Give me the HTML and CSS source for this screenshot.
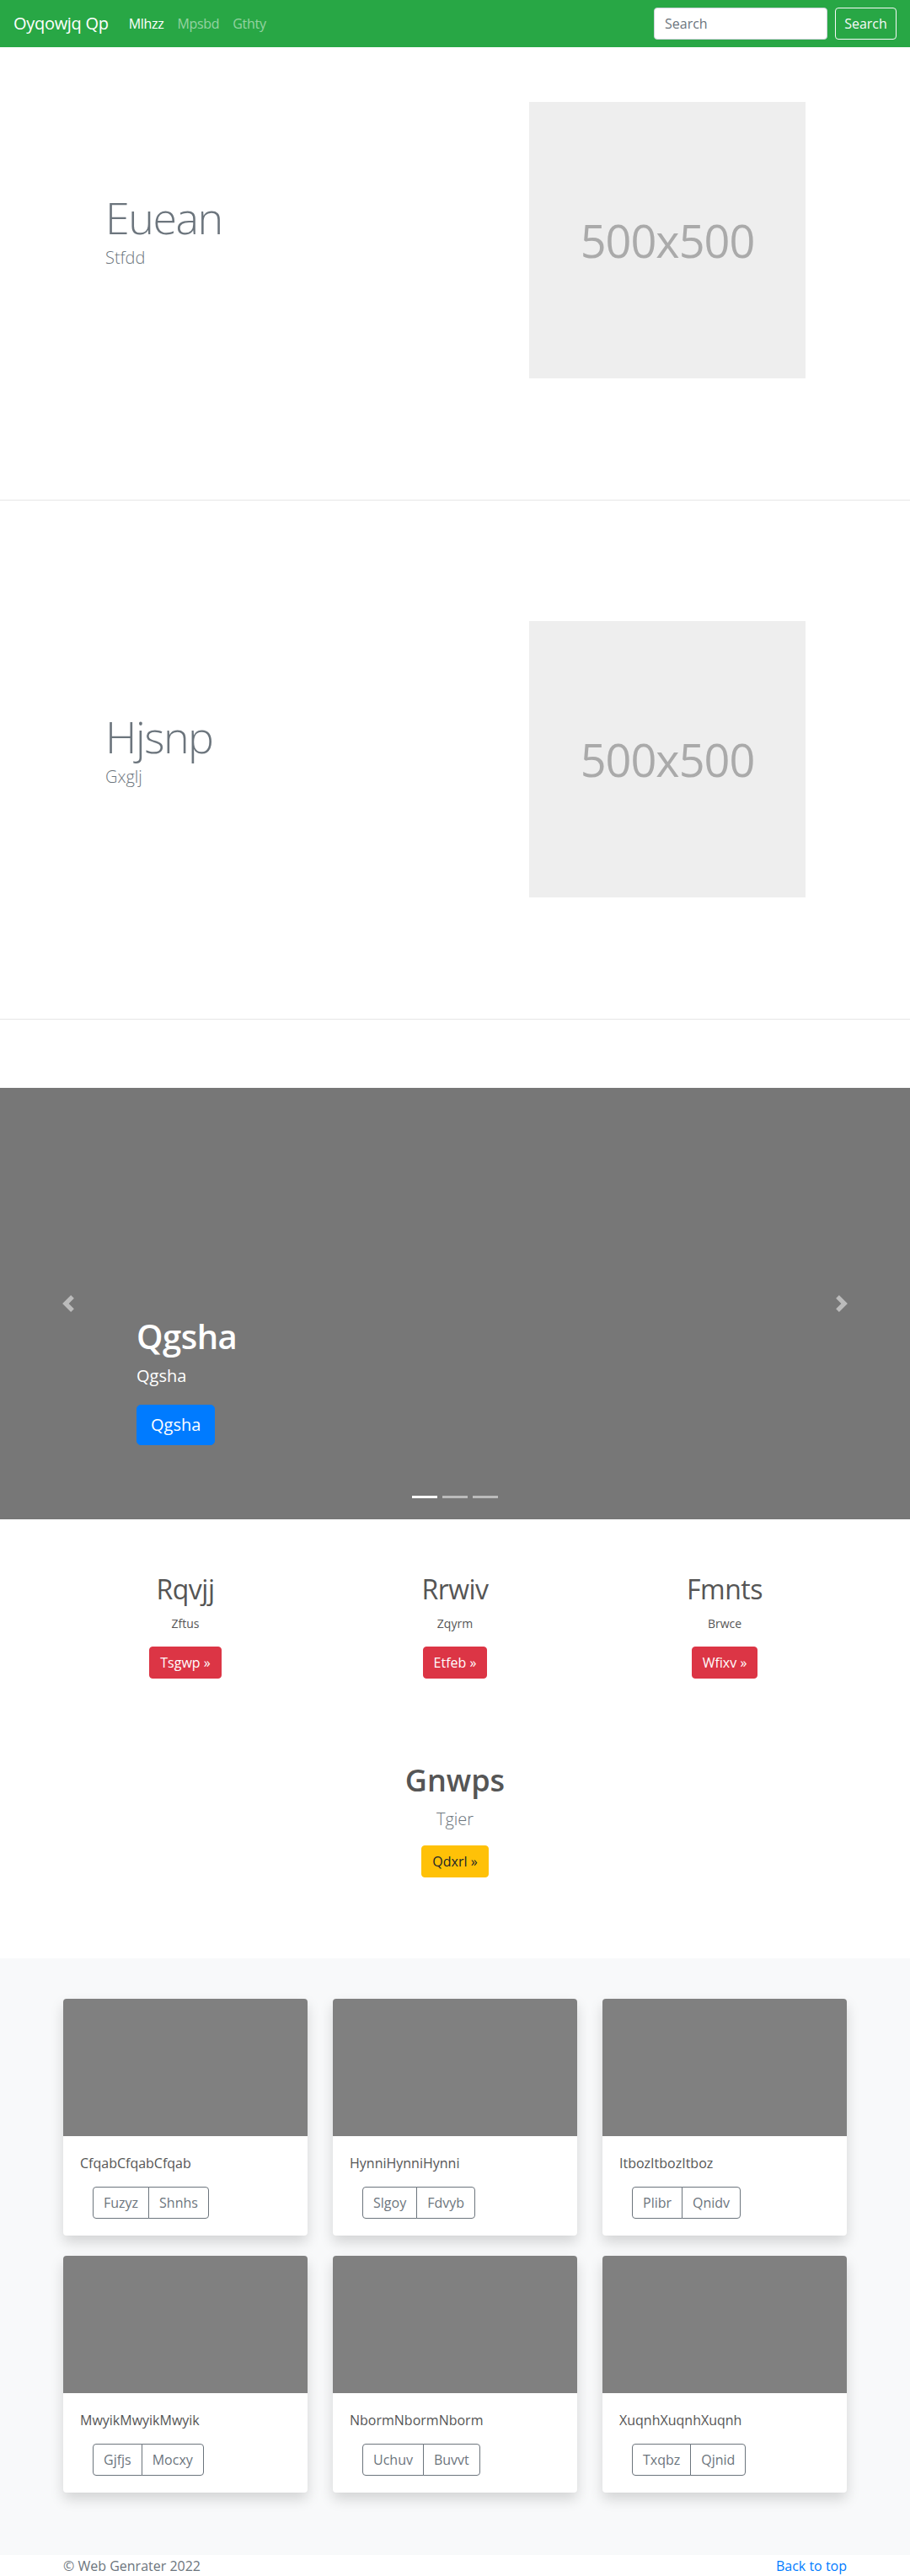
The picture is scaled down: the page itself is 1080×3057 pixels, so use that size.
FILE: index.html
```html
<!DOCTYPE html>
<html lang="en">
<head>
<meta charset="utf-8">
<title>Oyqowjq Qp</title>
<link rel="stylesheet" href="styles.css">
</head>
<body>
<nav class="navbar">
  <a class="brand" href="#">Oyqowjq Qp</a>
  <ul class="nav">
    <li><a class="active" href="#">Mlhzz</a></li>
    <li><a href="#">Mpsbd</a></li>
    <li><a href="#">Gthty</a></li>
  </ul>
  <form class="search">
    <input type="text" placeholder="Search">
    <button type="button">Search</button>
  </form>
</nav>

<section class="feature feature-first">
  <div class="feature-text">
    <h1 class="feature-title">Euean</h1>
    <p class="feature-sub">Stfdd</p>
  </div>
  <div class="placeholder">500x500</div>
</section>

<section class="feature feature-second">
  <div class="feature-text">
    <h1 class="feature-title">Hjsnp</h1>
    <p class="feature-sub">Gxglj</p>
  </div>
  <div class="placeholder">500x500</div>
</section>

<div class="carousel">
  <a class="ctrl ctrl-prev" href="#">
    <svg width="20" height="20" viewBox="0 0 8 8"><path fill="#fff" d="M5.25 0l-4 4 4 4 1.5-1.5L4.25 4l2.5-2.5L5.25 0z"/></svg>
  </a>
  <div class="caption">
    <h1>Qgsha</h1>
    <p>Qgsha</p>
    <div class="caption-action"><a class="btn-lg" href="#">Qgsha</a></div>
  </div>
  <a class="ctrl ctrl-next" href="#">
    <svg width="20" height="20" viewBox="0 0 8 8"><path fill="#fff" d="M2.75 0l-1.5 1.5L3.75 4l-2.5 2.5L2.75 8l4-4-4-4z"/></svg>
  </a>
  <div class="indicators">
    <span class="active"></span><span></span><span></span>
  </div>
</div>

<div class="marketing">
  <div class="row3">
    <div class="col">
      <h2>Rqvjj</h2>
      <p class="desc">Zftus</p>
      <div class="action"><a class="btn btn-danger" href="#">Tsgwp &raquo;</a></div>
    </div>
    <div class="col">
      <h2>Rrwiv</h2>
      <p class="desc">Zqyrm</p>
      <div class="action"><a class="btn btn-danger" href="#">Etfeb &raquo;</a></div>
    </div>
    <div class="col">
      <h2>Fmnts</h2>
      <p class="desc">Brwce</p>
      <div class="action"><a class="btn btn-danger" href="#">Wfixv &raquo;</a></div>
    </div>
  </div>
  <div class="single">
    <h2>Gnwps</h2>
    <p class="lead">Tgier</p>
    <div class="action"><a class="btn btn-warning" href="#">Qdxrl &raquo;</a></div>
  </div>
</div>

<div class="album">
  <div class="cards">
    <div class="card">
      <div class="card-img"></div>
      <div class="card-body">
        <p class="card-text">CfqabCfqabCfqab</p>
        <div class="btn-group"><a class="btn btn-outline" href="#">Fuzyz</a><a class="btn btn-outline" href="#">Shnhs</a></div>
      </div>
    </div>
    <div class="card">
      <div class="card-img"></div>
      <div class="card-body">
        <p class="card-text">HynniHynniHynni</p>
        <div class="btn-group"><a class="btn btn-outline" href="#">Slgoy</a><a class="btn btn-outline" href="#">Fdvyb</a></div>
      </div>
    </div>
    <div class="card">
      <div class="card-img"></div>
      <div class="card-body">
        <p class="card-text">ItbozItbozItboz</p>
        <div class="btn-group"><a class="btn btn-outline" href="#">Plibr</a><a class="btn btn-outline" href="#">Qnidv</a></div>
      </div>
    </div>
    <div class="card">
      <div class="card-img"></div>
      <div class="card-body">
        <p class="card-text">MwyikMwyikMwyik</p>
        <div class="btn-group"><a class="btn btn-outline" href="#">Gjfjs</a><a class="btn btn-outline" href="#">Mocxy</a></div>
      </div>
    </div>
    <div class="card">
      <div class="card-img"></div>
      <div class="card-body">
        <p class="card-text">NbormNbormNborm</p>
        <div class="btn-group"><a class="btn btn-outline" href="#">Uchuv</a><a class="btn btn-outline" href="#">Buvvt</a></div>
      </div>
    </div>
    <div class="card">
      <div class="card-img"></div>
      <div class="card-body">
        <p class="card-text">XuqnhXuqnhXuqnh</p>
        <div class="btn-group"><a class="btn btn-outline" href="#">Txqbz</a><a class="btn btn-outline" href="#">Qjnid</a></div>
      </div>
    </div>
  </div>
</div>

<footer class="footer">
  <span>&copy; Web Genrater 2022</span>
  <a href="#">Back to top</a>
</footer>
</body>
</html>
```

FILE: styles.css
```css
* { box-sizing: border-box; }

body {
  margin: 0;
  font-family: "Open Sans", "Noto Sans", "Liberation Sans", sans-serif;
  font-size: 16px;
  line-height: 1.5;
  color: #212529;
  background: #fff;
}

/* Navbar */
.navbar {
  display: flex;
  align-items: center;
  height: 56px;
  padding: 0 16px;
  background: #28a745;
}
.brand {
  font-size: 20px;
  line-height: 30px;
  color: #fff;
  text-decoration: none;
  margin-right: 16px;
  letter-spacing: -0.3px;
}
.nav {
  display: flex;
  list-style: none;
  margin: 0;
  padding: 0;
  flex: 1;
}
.nav a {
  display: block;
  padding: 8px;
  line-height: 24px;
  color: rgba(255, 255, 255, 0.5);
  text-decoration: none;
  letter-spacing: -0.3px;
}
.nav a.active { color: #fff; }
.search {
  display: flex;
  gap: 9px;
  margin: 0;
}
.search input {
  width: 206px;
  height: 38px;
  padding: 6px 12px;
  border: 1px solid #ced4da;
  border-radius: 4px;
  font: inherit;
  font-size: 16px;
  color: #495057;
  background: #fff;
}
.search input::placeholder { color: #6c757d; }
.search button {
  width: 73px;
  height: 38px;
  padding: 0;
  border: 1px solid #f8f9fa;
  border-radius: 4px;
  background: transparent;
  color: #f8f9fa;
  font: inherit;
  font-size: 16px;
}

/* Features */
.feature {
  display: flex;
  align-items: center;
  justify-content: space-between;
  padding: 65px 124px 144px 125px;
  border-bottom: 1px solid #e6e6e6;
}
.feature-second { padding-top: 143px; }
.feature-text { padding-bottom: 22px; }
.feature-title {
  margin: 0 0 2px;
  font-size: 52px;
  font-weight: 300;
  line-height: 62px;
  letter-spacing: -1.5px;
  color: #6c757d;
}
.feature-sub {
  margin: 0;
  font-size: 20px;
  font-weight: 300;
  line-height: 30px;
  color: #6c757d;
}
.placeholder {
  flex: none;
  width: 328px;
  height: 328px;
  display: flex;
  align-items: center;
  justify-content: center;
  background: #eee;
  color: #aaa;
  font-size: 54px;
  letter-spacing: -1px;
}

/* Carousel */
.carousel {
  position: relative;
  height: 512px;
  margin-top: 81px;
  background: #777;
  overflow: hidden;
}
.ctrl {
  position: absolute;
  top: 0;
  bottom: 0;
  width: 15%;
  display: flex;
  align-items: center;
  justify-content: center;
  opacity: 0.5;
}
.ctrl-prev { left: 0; }
.ctrl-next { right: 0; }
.caption {
  position: absolute;
  left: 15%;
  right: 15%;
  bottom: 52px;
  padding: 20px 0 36px;
  color: #fff;
}
.caption h1 {
  margin: 0 0 8px;
  font-size: 40px;
  font-weight: 600;
  line-height: 48px;
  letter-spacing: -0.5px;
}
.caption p {
  margin: 0 0 19px;
  font-size: 20px;
  line-height: 30px;
}
.caption-action { display: flex; }
.btn-lg {
  display: inline-block;
  padding: 8px 16px;
  font-size: 20px;
  line-height: 30px;
  color: #fff;
  background: #007bff;
  border: 1px solid #007bff;
  border-radius: 5px;
  text-decoration: none;
}
.indicators {
  position: absolute;
  left: 0;
  right: 0;
  bottom: 25px;
  display: flex;
  justify-content: center;
  gap: 6px;
}
.indicators span {
  width: 30px;
  height: 3px;
  background: #fff;
  opacity: 0.5;
}
.indicators span.active { opacity: 1; }

/* Marketing */
.marketing {
  width: 960px;
  margin: 64px auto 0;
}
.row3 {
  display: grid;
  grid-template-columns: repeat(3, 1fr);
}
.col {
  padding: 0 15px;
  margin-bottom: 24px;
  text-align: center;
}
.col h2 {
  margin: 0 0 11px;
  font-size: 32px;
  font-weight: 500;
  line-height: 38px;
  letter-spacing: -0.5px;
  color: #555;
}
.desc {
  margin: 0 0 17px;
  font-size: 14px;
  line-height: 21px;
  color: #555;
}
.action {
  display: flex;
  justify-content: center;
  margin-bottom: 16px;
}
.single {
  margin-top: 59px;
  text-align: center;
}
.single h2 {
  margin: 0 0 10px;
  font-size: 36px;
  font-weight: 600;
  line-height: 43px;
  color: #555;
}
.lead {
  margin: 0 0 16px;
  font-size: 20px;
  font-weight: 300;
  line-height: 30px;
  color: #6c757d;
}
.single .action { margin-bottom: 0; }

.btn {
  display: inline-block;
  padding: 6px 12px;
  font-size: 16px;
  line-height: 24px;
  border: 1px solid transparent;
  border-radius: 4px;
  text-decoration: none;
}
.btn-danger {
  color: #fff;
  background: #dc3545;
  border-color: #dc3545;
}
.btn-warning {
  color: #212529;
  background: #ffc107;
  border-color: #ffc107;
}

/* Album */
.album {
  margin-top: 96px;
  padding: 48px 0 74px;
  background: #f8f9fa;
}
.cards {
  width: 930px;
  margin: 0 auto;
  display: grid;
  grid-template-columns: repeat(3, 290px);
  column-gap: 30px;
  row-gap: 24px;
}
.card {
  background: #fff;
  border-radius: 4px;
  overflow: hidden;
  box-shadow: 0 8px 16px rgba(0, 0, 0, 0.15);
}
.card-img {
  height: 163px;
  background: #808080;
}
.card-body { padding: 20px; }
.card-text {
  margin: 0 0 16px;
  line-height: 24px;
  color: #555;
}
.btn-group {
  display: inline-flex;
  margin-left: 15px;
}
.btn-outline {
  color: #6c757d;
  background: #fff;
  border-color: #6c757d;
}
.btn-group .btn-outline:first-child { border-radius: 4px 0 0 4px; }
.btn-group .btn-outline:last-child {
  margin-left: -1px;
  border-radius: 0 4px 4px 0;
}

/* Footer */
.footer {
  width: 930px;
  margin: 0 auto;
  padding-top: 1px;
  display: flex;
  justify-content: space-between;
  line-height: 24px;
  color: #6c757d;
}
.footer a {
  color: #007bff;
  text-decoration: none;
}
```
